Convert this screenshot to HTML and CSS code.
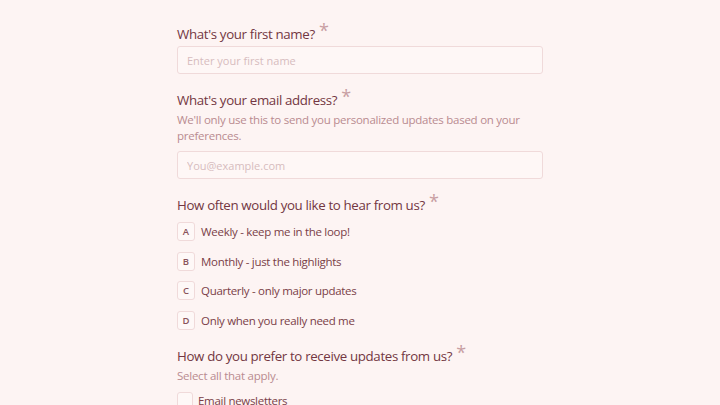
FILE: index.html
```html
<!DOCTYPE html>
<html lang="en">
<head>
<meta charset="utf-8">
<link rel="stylesheet" href="styles.css">
</head>
<body>
<main class="form">
  <section class="field">
    <h2 class="q">What's your first name? <span class="req">*</span></h2>
    <input class="text" type="text" placeholder="Enter your first name">
  </section>
  <section class="field">
    <h2 class="q">What's your email address? <span class="req">*</span></h2>
    <p class="desc">We'll only use this to send you personalized updates based on your preferences.</p>
    <input class="text" type="email" placeholder="You@example.com">
  </section>
  <section class="field">
    <h2 class="q">How often would you like to hear from us? <span class="req">*</span></h2>
    <ul class="opts">
      <li class="opt"><span class="key">A</span><span>Weekly - keep me in the loop!</span></li>
      <li class="opt"><span class="key">B</span><span>Monthly - just the highlights</span></li>
      <li class="opt"><span class="key">C</span><span>Quarterly - only major updates</span></li>
      <li class="opt"><span class="key">D</span><span>Only when you really need me</span></li>
    </ul>
  </section>
  <section class="field">
    <h2 class="q">How do you prefer to receive updates from us? <span class="req">*</span></h2>
    <p class="desc">Select all that apply.</p>
    <ul class="checks">
      <li class="check"><span class="box"></span><span>Email newsletters</span></li>
    </ul>
  </section>
</main>
</body>
</html>
```
FILE: styles.css
```css
html, body {
  margin: 0;
  padding: 0;
  background: #fdf4f3;
}
body {
  font-family: "Open Sans", "Noto Sans", sans-serif;
  color: #7a3e47;
  height: 405px;
  overflow: hidden;
}
.form {
  width: 366px;
  margin: 0 auto;
  padding-top: 24px;
  display: flex;
  flex-direction: column;
  gap: 16px;
}
.field {
  display: flex;
  flex-direction: column;
}
.q {
  margin: 0 0 2px;
  font-size: 13.3px;
  font-weight: 500;
  letter-spacing: -0.35px;
  line-height: 20px;
  color: #733742;
  white-space: nowrap;
}
.req {
  font-size: 18px;
  color: #c89ea2;
  font-weight: 400;
  position: relative;
  top: -2px;
  line-height: 0;
  margin-left: 1px;
}
.desc {
  margin: 0 0 7px;
  font-size: 11.5px;
  letter-spacing: -0.25px;
  line-height: 16px;
  color: #b98b90;
}
.text {
  box-sizing: border-box;
  height: 28px;
  width: 100%;
  border: 1px solid #f0dada;
  border-radius: 3px;
  background: #fef7f6;
  padding: 0 9px;
  font-family: inherit;
  font-size: 11px;
  color: #7a3e47;
  outline: none;
}
.text::placeholder {
  color: #d7bcbe;
}
.opts, .checks {
  list-style: none;
  margin: 5px 0 0;
  padding: 0;
  display: flex;
  flex-direction: column;
  gap: 10.7px;
}
.checks {
  margin-top: 0;
}
.opt, .check {
  display: flex;
  align-items: center;
  gap: 6px;
  font-size: 11.5px;
  letter-spacing: -0.3px;
  line-height: 19px;
  color: #7a3e47;
}
.key {
  box-sizing: border-box;
  width: 18px;
  height: 19px;
  border: 1px solid #f0dada;
  border-radius: 3px;
  background: #fef8f7;
  display: flex;
  align-items: center;
  justify-content: center;
  font-size: 9.5px;
  font-weight: 600;
  letter-spacing: 0;
  color: #8a535a;
}
.check {
  gap: 5px;
}
.box {
  box-sizing: border-box;
  width: 16px;
  height: 17px;
  border: 1px solid #f0dada;
  border-radius: 3px;
  background: #fef8f7;
}
```
